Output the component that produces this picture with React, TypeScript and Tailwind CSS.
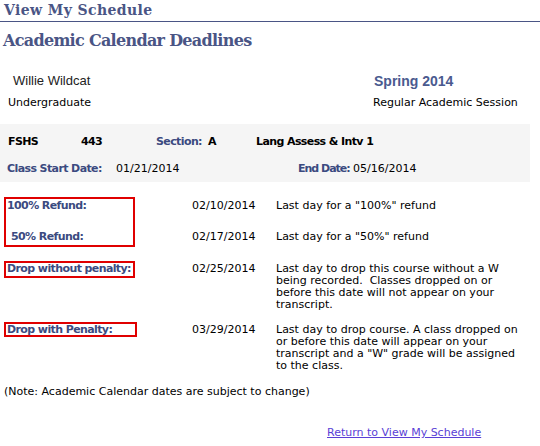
import React from "react";

const label = "text-[#3b4a80] font-bold tracking-[-0.6px]";

export default function App() {
  return (
    <div className="w-[540px] h-[446px] overflow-hidden bg-white text-black font-['DejaVu_Sans',sans-serif] text-[11px] leading-[12px]">
      {/* Page title */}
      <div className="h-[22px] border-b border-[#4a5585] pl-[4px] pt-[2px] font-['DejaVu_Serif',serif] font-bold text-[14px] leading-[16px] tracking-[0.4px] text-[#4a5585]">
        View My Schedule
      </div>
      <div className="mt-[9px] pl-[3px] font-['DejaVu_Serif',serif] font-bold text-[16px] leading-[20px] tracking-[-0.7px] text-[#4a5585]">
        Academic Calendar Deadlines
      </div>

      {/* Student / term */}
      <div className="mt-[22px] flex h-[16px] items-start">
        <div className="w-[374px] pl-[13px] font-['Liberation_Sans',Arial,sans-serif] text-[13px] leading-[15px] text-[#222]">
          Willie Wildcat
        </div>
        <div className="font-['Liberation_Sans',Arial,sans-serif] font-bold text-[14px] leading-[16px] text-[#4a5a8f]">
          Spring 2014
        </div>
      </div>
      <div className="mt-[8px] flex h-[12px]">
        <div className="w-[373px] pl-[8px]">Undergraduate</div>
        <div>Regular Academic Session</div>
      </div>

      {/* Class box */}
      <div className="mt-[15px] w-[530px] bg-[#f5f5f5] pt-[12px] pb-[7px]">
        <div className="flex h-[12px] whitespace-nowrap font-bold tracking-[-0.6px]">
          <div className="w-[81px] pl-[8px]">FSHS</div>
          <div className="w-[75px]">443</div>
          <div className={`w-[52px] ${label}`}>Section:</div>
          <div className="w-[48px]">A</div>
          <div>Lang Assess &amp; Intv 1</div>
        </div>
        <div className="mt-[15px] flex h-[12px] whitespace-nowrap">
          <div className={`w-[116px] pl-[7px] ${label}`}>Class Start Date:</div>
          <div className="w-[182px]">01/21/2014</div>
          <div className="w-[55px] text-[#3b4a80] font-bold tracking-[-1px]">End Date:</div>
          <div>05/16/2014</div>
        </div>
      </div>

      {/* Deadlines */}
      <div className="mt-[15px] flex whitespace-nowrap">
        <div className="ml-[4px] h-[50px] w-[131px] border-2 border-[#e00000] pt-[1px]">
          <div className={`h-[12px] pl-[1px] ${label}`}>100% Refund:</div>
          <div className={`mt-[19px] h-[12px] pl-[5px] ${label}`}>50% Refund:</div>
        </div>
        <div className="ml-[57px] pt-[3px]">
          <div className="flex h-[12px]">
            <div className="w-[84px]">02/10/2014</div>
            <div>Last day for a "100%" refund</div>
          </div>
          <div className="mt-[19px] flex h-[12px]">
            <div className="w-[84px]">02/17/2014</div>
            <div>Last day for a "50%" refund</div>
          </div>
        </div>
      </div>

      <div className="mt-[14px] flex whitespace-nowrap">
        <div className="ml-[4px] h-[17px] w-[131px] border-2 border-[#e00000]">
          <div className={`h-[12px] pl-[1px] ${label}`}>Drop without penalty:</div>
        </div>
        <div className="ml-[57px] flex pt-[2px]">
          <div className="w-[84px]">02/25/2014</div>
          <div>
            Last day to drop this course without a W
            <br />
            being recorded.&nbsp; Classes dropped on or
            <br />
            before this date will not appear on your
            <br />
            transcript.
          </div>
        </div>
      </div>

      <div className="mt-[11px] flex whitespace-nowrap">
        <div className="ml-[4px] h-[15px] w-[133px] border-2 border-[#e00000] leading-[11px]">
          <div className={`pl-[1px] ${label}`}>Drop with Penalty:</div>
        </div>
        <div className="ml-[55px] flex pt-[2px]">
          <div className="w-[84px]">03/29/2014</div>
          <div>
            Last day to drop course. A class dropped on
            <br />
            or before this date will appear on your
            <br />
            transcript and a "W" grade will be assigned
            <br />
            to the class.
          </div>
        </div>
      </div>

      <div className="mt-[14px] pl-[4px] h-[12px]">(Note: Academic Calendar dates are subject to change)</div>

      <div className="mt-[29px] pl-[327px] h-[14px]">
        <a href="#" className="text-[#5a3fd6] underline">
          Return to View My Schedule
        </a>
      </div>
    </div>
  );
}
